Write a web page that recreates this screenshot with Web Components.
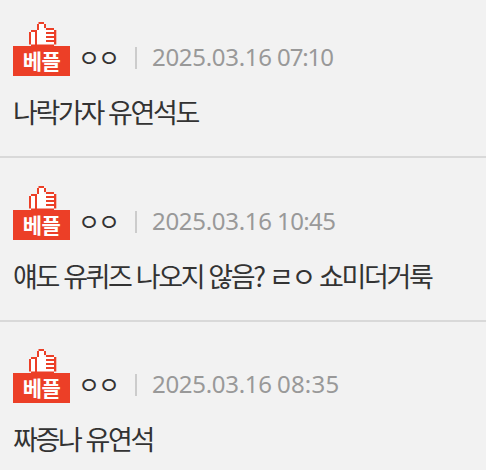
<!DOCTYPE html>
<html lang="ko">
<head>
<meta charset="utf-8">
<title>베플</title>
<style>
body {
  margin: 0;
  background: #f2f2f2;
  font-family: 'Noto Sans CJK KR', sans-serif;
  overflow: hidden;
}
</style>
</head>
<body>
<comment-list>
  <comment-item name="ㅇㅇ" date="2025.03.16" time="07:10" style="--time-spacing: -1.1px">나락가자 유연석도</comment-item>
  <comment-item name="ㅇㅇ" date="2025.03.16" time="10:45" style="--time-spacing: -0.6px">얘도 유퀴즈 나오지 않음? ㄹㅇ 쇼미더거룩</comment-item>
  <comment-item name="ㅇㅇ" date="2025.03.16" time="08:35" style="--time-spacing: 0.2px">짜증나 유연석</comment-item>
</comment-list>

<script>
const badgeTemplate = document.createElement('template')
badgeTemplate.innerHTML = `
<style>
:host {
  display: flex;
  flex-direction: column;
  align-items: flex-start;
  width: 57px;
}

svg {
  display: block;
  margin-left: 16px;
}

.label {
  width: 57px;
  height: 30px;
  box-sizing: border-box;
  background: #ec3f27;
  color: #fff;
  font-size: 21px;
  font-weight: 700;
  line-height: 29px;
  letter-spacing: -0.5px;
  text-align: center;
}
</style>
<svg width="28" height="24" viewBox="0 0 28 24">
  <path fill="#fff" d="M2 10H8V6H10V2H15V8H25V23H2Z"/>
  <path fill="#ec3f27" d="M9.5 0H15V2H9.5ZM8 2H10V8H8ZM15 2H17V6H15ZM17 6H25V8H17ZM2 8H8V10H2ZM0 10H2V22.5H0ZM6 10H8V23H6ZM25 8H27.3V22.5H25ZM17 10H25V12H17ZM17 14H25V16H17ZM17 18H25V20H17ZM2 22.5H25V24H2Z"/>
</svg>
<div class="label"><slot></slot></div>
`

customElements.define('best-badge',
  /**
   * Thumbs-up label of a top comment.
   */
  class extends HTMLElement {
    constructor () {
      super()
      this.attachShadow({ mode: 'open' })
      this.shadowRoot.appendChild(badgeTemplate.content.cloneNode(true))
    }
  })

const itemTemplate = document.createElement('template')
itemTemplate.innerHTML = `
<style>
:host {
  display: block;
  box-sizing: border-box;
  height: 163.5px;
  padding: 27.5px 13px 0;
  border-bottom: 2px solid #d9d9d9;
}

.meta {
  display: flex;
  height: 54px;
}

.name {
  margin: 17px 0 0 8px;
  width: 46px;
  font-size: 24px;
  line-height: 35px;
  letter-spacing: -2px;
  color: #333;
  white-space: nowrap;
}

.bar {
  width: 2px;
  height: 22px;
  margin: 25px 0 0 11px;
  background: #ccc;
}

.date,
.time {
  margin-top: 17px;
  font-family: 'Noto Sans', sans-serif;
  font-size: 24px;
  line-height: 36px;
  color: #999;
  white-space: nowrap;
}

.date {
  box-sizing: border-box;
  width: 140px;
  padding-left: 15px;
  letter-spacing: -0.3px;
}

.time {
  letter-spacing: var(--time-spacing, 0);
}

.text {
  margin: 16px 0 0;
  font-size: 27px;
  line-height: 40px;
  letter-spacing: -2.37px;
  color: #333;
  white-space: nowrap;
}
</style>
<div class="meta">
  <best-badge>베플</best-badge>
  <span class="name"></span>
  <span class="bar"></span>
  <span class="date"></span>
  <span class="time"></span>
</div>
<p class="text"><slot></slot></p>
`

customElements.define('comment-item',
  /**
   * One comment: badge, author, date and text.
   */
  class extends HTMLElement {
    constructor () {
      super()
      this.attachShadow({ mode: 'open' })
      this.shadowRoot.appendChild(itemTemplate.content.cloneNode(true))
    }

    static get observedAttributes () {
      return ['name', 'date', 'time']
    }

    attributeChangedCallback (name, oldValue, newValue) {
      this.shadowRoot.querySelector('.' + name).textContent = newValue
    }
  })

const listTemplate = document.createElement('template')
listTemplate.innerHTML = `
<style>
:host {
  display: flex;
  flex-direction: column;
  height: 470px;
  overflow: hidden;
}

::slotted(comment-item) {
  flex: none;
}

::slotted(comment-item:first-child) {
  margin-top: -5.5px;
}
</style>
<slot></slot>
`

customElements.define('comment-list',
  class extends HTMLElement {
    constructor () {
      super()
      this.attachShadow({ mode: 'open' })
      this.shadowRoot.appendChild(listTemplate.content.cloneNode(true))
    }
  })
</script>
</body>
</html>
